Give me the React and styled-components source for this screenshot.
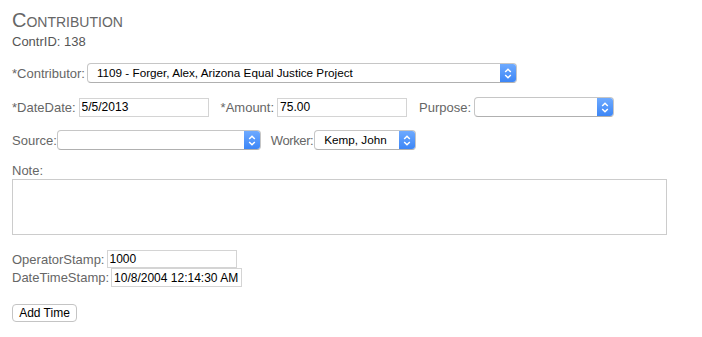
import styled, { createGlobalStyle } from "styled-components";

const GlobalStyle = createGlobalStyle`
  body {
    margin: 0;
    background: #fff;
    font-family: "Liberation Sans", Arial, sans-serif;
  }
`;

function Stepper() {
  return (
    <StepBox>
      <svg width="8" height="11" viewBox="0 0 8 11">
        <path
          d="M1.2 4 L4 1.3 L6.8 4 M1.2 7 L4 9.7 L6.8 7"
          fill="none"
          stroke="#fff"
          strokeWidth="1.5"
        />
      </svg>
    </StepBox>
  );
}

function Select({ width, value }) {
  return (
    <SelectBox $width={width}>
      <SelectText>{value}</SelectText>
      <Stepper />
    </SelectBox>
  );
}

export default function App() {
  return (
    <Page>
      <GlobalStyle />
      <Title>Contribution</Title>
      <SubInfo>ContrID: 138</SubInfo>

      <Row $top={14}>
        <Field $gap={2}>
          <Label>*Contributor:</Label>
          <Select width={430} value="1109 - Forger, Alex, Arizona Equal Justice Project" />
        </Field>
      </Row>

      <Row $top={14} $gap={12}>
        <Field>
          <Label>*DateDate:</Label>
          <TextInput $width={130} value="5/5/2013" readOnly />
        </Field>
        <Field>
          <Label>*Amount:</Label>
          <TextInput $width={130} value="75.00" readOnly />
        </Field>
        <Field $gap={3}>
          <Label>Purpose:</Label>
          <Select width={140} value="" />
        </Field>
      </Row>

      <Row $top={13}>
        <Field $gap={0}>
          <Label>Source:</Label>
          <Select width={204} value="" />
        </Field>
        <Field $gap={1}>
          <Label $tight>Worker:</Label>
          <Select width={102} value="Kemp, John" />
        </Field>
      </Row>

      <NoteLabel>Note:</NoteLabel>
      <NoteArea readOnly />

      <Stamps>
        <Field $gap={2}>
          <Label>OperatorStamp:</Label>
          <TextInput $width={130} $h={18} value="1000" readOnly />
        </Field>
        <Field $gap={2}>
          <Label>DateTimeStamp:</Label>
          <TextInput $width={131} $h={19} value="10/8/2004 12:14:30 AM" readOnly />
        </Field>
      </Stamps>

      <AddButton type="button">Add Time</AddButton>
    </Page>
  );
}

const Page = styled.div`
  padding: 9px 12px 12px;
  color: #666;
  font-size: 13px;
`;

const Title = styled.h1`
  margin: 0;
  font-size: 20px;
  font-weight: normal;
  font-variant: small-caps;
  line-height: 23px;
  color: #666;
`;

const SubInfo = styled.div`
  margin-top: 2px;
  font-size: 13px;
  line-height: 15px;
  color: #555;
`;

const Row = styled.div`
  display: flex;
  align-items: center;
  gap: ${(p) => p.$gap || 10}px;
  margin-top: ${(p) => p.$top}px;
  height: 20px;
`;

const Field = styled.div`
  display: flex;
  align-items: center;
  gap: ${(p) => (p.$gap != null ? p.$gap : 3)}px;
`;

const Label = styled.span`
  font-size: 13px;
  color: #666;
  white-space: nowrap;
  letter-spacing: ${(p) => (p.$tight ? "-0.4px" : "0")};
`;

const TextInput = styled.input`
  box-sizing: border-box;
  width: ${(p) => p.$width}px;
  height: ${(p) => p.$h || 19}px;
  border: 1px solid #d4d4d4;
  border-radius: 0;
  padding: 0 2px;
  margin: 0;
  font-family: "Liberation Sans", Arial, sans-serif;
  font-size: 12px;
  color: #000;
  background: #fff;
  outline: none;
`;

const SelectBox = styled.div`
  box-sizing: border-box;
  display: flex;
  align-items: stretch;
  width: ${(p) => p.$width}px;
  height: 20px;
  border: 1px solid #c6c6c6;
  border-bottom-color: #b0b0b0;
  border-radius: 4px;
  background: #fff;
  overflow: hidden;
`;

const SelectText = styled.span`
  flex: 1;
  padding-left: 9px;
  font-size: 11.7px;
  line-height: 18px;
  color: #000;
  white-space: nowrap;
  overflow: hidden;
`;

const StepBox = styled.span`
  width: 16px;
  display: flex;
  align-items: center;
  justify-content: center;
  background: linear-gradient(#6eaaff, #3d86f6);
`;

const NoteLabel = styled.div`
  margin-top: 13px;
  font-size: 13px;
  line-height: 15px;
  color: #666;
`;

const NoteArea = styled.textarea`
  display: block;
  box-sizing: border-box;
  width: 655px;
  height: 56px;
  margin: 1px 0 0;
  border: 1px solid #ccc;
  resize: none;
  outline: none;
`;

const Stamps = styled.div`
  display: flex;
  flex-direction: column;
  margin-top: 15px;
`;

const AddButton = styled.button`
  margin-top: 17px;
  box-sizing: border-box;
  width: 65px;
  height: 18px;
  padding: 0;
  border: 1px solid #c4c4c4;
  border-radius: 4px;
  background: #fff;
  font-family: "Liberation Sans", Arial, sans-serif;
  font-size: 12px;
  color: #000;
`;
